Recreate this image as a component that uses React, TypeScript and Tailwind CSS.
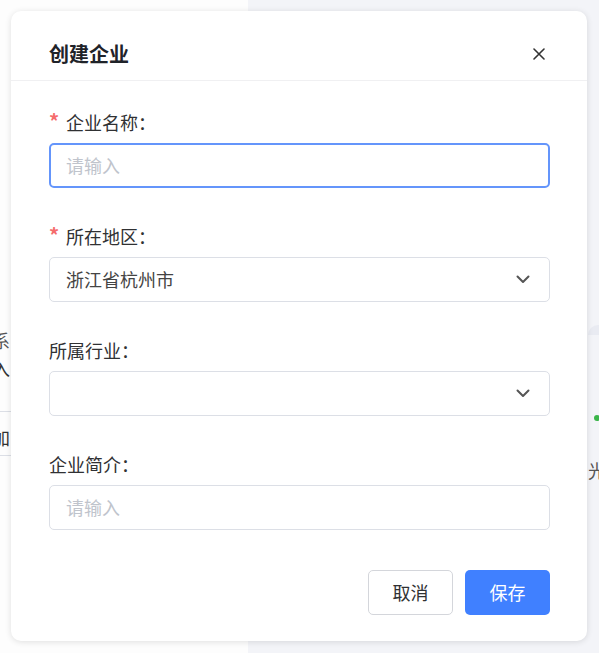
import React from "react";

function Chevron() {
  return (
    <svg width="14" height="9" viewBox="0 0 14 9" fill="none">
      <path d="M1.5 1.5L7 7L12.5 1.5" stroke="#555" strokeWidth="2" strokeLinecap="round" strokeLinejoin="round" />
    </svg>
  );
}

function Label({ text, required }: { text: string; required?: boolean }) {
  return (
    <div className="flex items-center h-[24px] text-[18px] leading-[24px] text-[#303133]">
      {required && <span className="text-[#f56c6c] w-[17px] text-[20px] leading-[24px] font-bold relative top-[-1px]">*</span>}
      <span>{text}</span>
    </div>
  );
}

export default function App() {
  const font = { fontFamily: '"Noto Sans CJK SC", "Noto Sans", sans-serif' };
  return (
    <div className="relative w-[599px] h-[653px] overflow-hidden" style={font}>
      <div className="flex w-full h-full">
        <div className="w-[248px] h-full bg-[#fdfdfd] relative">
          <div className="absolute left-[-8px] top-[328px] text-[18px] leading-[24px] text-[#555]">系</div>
          <div className="absolute left-[-8px] top-[356px] text-[18px] leading-[24px] text-[#333]">入</div>
          <div className="absolute left-0 top-[411px] w-[20px] h-px bg-[#dcdfe6]" />
          <div className="absolute left-[-8px] top-[425px] text-[18px] leading-[24px] text-[#333]">加</div>
          <div className="absolute left-0 top-[455px] w-[20px] h-px bg-[#dcdfe6]" />
        </div>
        <div className="flex-1 h-full bg-[#f3f4f8] relative">
          <div className="absolute left-[340px] top-[325px] w-[30px] h-[10px] rounded-tl-[10px] bg-[#e9ebf2]" />
          <div className="absolute left-[346px] top-[415px] w-[6px] h-[6px] rounded-full bg-[#3bb54a]" />
          <div className="absolute left-[340px] top-[458px] text-[18px] leading-[24px] text-[#555]">光</div>
        </div>
      </div>

      <div className="absolute left-[11px] top-[11px] w-[576px] h-[630px] bg-white rounded-[10px] shadow-[0_1px_6px_rgba(0,0,0,0.12)] flex flex-col">
        <div className="h-[70px] flex items-start justify-between pl-[38px] pr-[42px] pt-[31px] border-b border-[#f0f0f2]">
          <div className="text-[20px] leading-[24px] font-bold text-[#1f2329]">创建企业</div>
          <svg width="12" height="12" viewBox="0 0 12 12" className="mt-[6px]">
            <path d="M1 1L11 11M11 1L1 11" stroke="#333" strokeWidth="1.6" strokeLinecap="round" />
          </svg>
        </div>

        <div className="flex flex-col pl-[38px] pr-[37px] pt-[29px]">
          <Label text="企业名称：" required />
          <div className="mt-[9px] h-[45px] rounded-[5px] border-2 border-[#6495fb] flex items-center pl-[15px] text-[18px] text-[#c0c4cc]">
            请输入
          </div>

          <div className="mt-[36px]">
            <Label text="所在地区：" required />
          </div>
          <div className="mt-[9px] h-[45px] rounded-[5px] border border-[#dcdfe6] flex items-center justify-between pl-[16px] pr-[19px] text-[18px] text-[#444]">
            <span>浙江省杭州市</span>
            <Chevron />
          </div>

          <div className="mt-[36px]">
            <Label text="所属行业：" />
          </div>
          <div className="mt-[9px] h-[45px] rounded-[5px] border border-[#dcdfe6] flex items-center justify-end pr-[19px]">
            <Chevron />
          </div>

          <div className="mt-[36px]">
            <Label text="企业简介：" />
          </div>
          <div className="mt-[9px] h-[45px] rounded-[5px] border border-[#dcdfe6] flex items-center pl-[16px] text-[18px] text-[#c0c4cc]">
            请输入
          </div>

          <div className="mt-[40px] flex justify-end gap-[12px]">
            <button className="w-[85px] h-[45px] rounded-[5px] border border-[#d4d6db] bg-white text-[18px] text-[#303133]">
              取消
            </button>
            <button className="w-[85px] h-[45px] rounded-[5px] bg-[#4080ff] text-[18px] text-white">
              保存
            </button>
          </div>
        </div>
      </div>
    </div>
  );
}
